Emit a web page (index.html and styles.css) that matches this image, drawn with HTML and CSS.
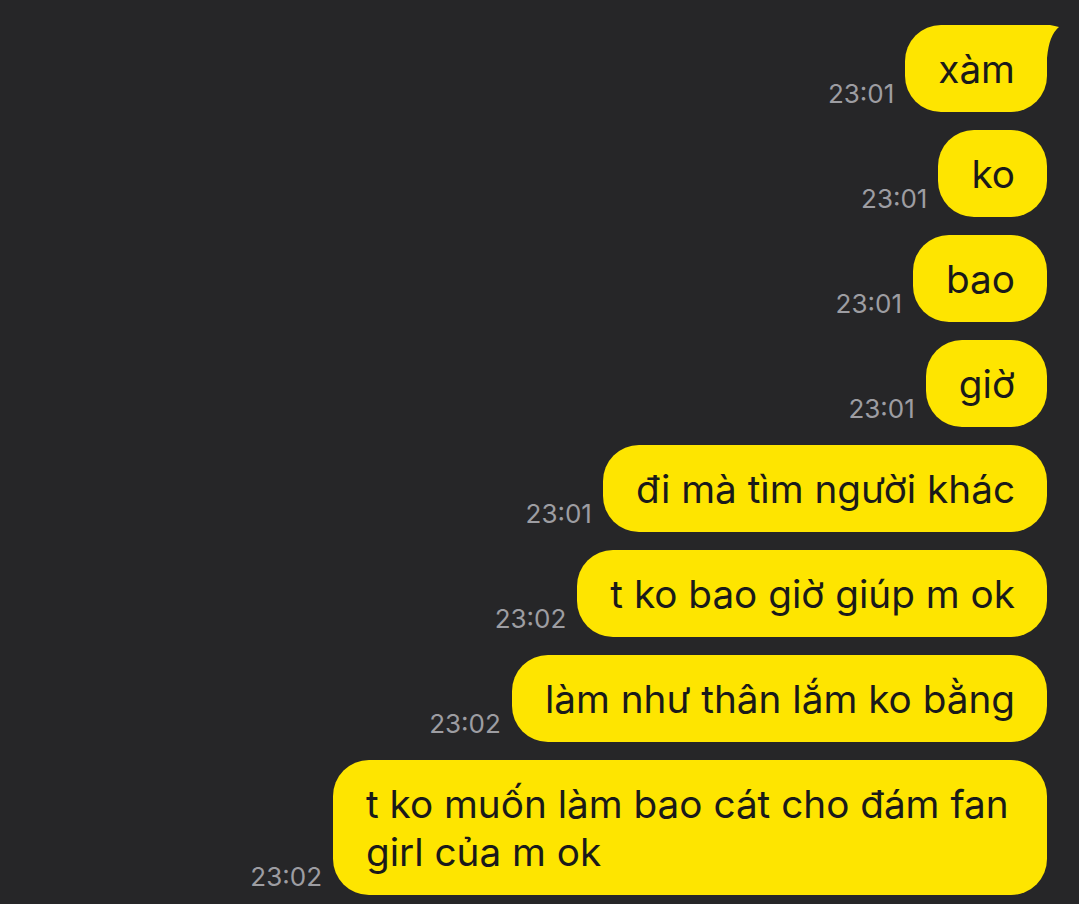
FILE: index.html
```html
<!DOCTYPE html>
<html lang="vi">
<head>
<meta charset="utf-8">
<title>Chat</title>
<link rel="stylesheet" href="styles.css">
</head>
<body>
<main class="chat">
  <div class="row">
    <span class="time">23:01</span>
    <div class="bubble bubble--first">xàm
      <svg class="tail" width="14" height="36" viewBox="0 0 14 36" aria-hidden="true"><path d="M0 0 L4 0 Q9 1 13 2 Q3 10 1 33 L0 36 Z" fill="#fee500"/></svg>
    </div>
  </div>
  <div class="row">
    <span class="time">23:01</span>
    <div class="bubble">ko</div>
  </div>
  <div class="row">
    <span class="time">23:01</span>
    <div class="bubble">bao</div>
  </div>
  <div class="row">
    <span class="time">23:01</span>
    <div class="bubble">giờ</div>
  </div>
  <div class="row">
    <span class="time">23:01</span>
    <div class="bubble">đi mà tìm người khác</div>
  </div>
  <div class="row">
    <span class="time">23:02</span>
    <div class="bubble">t ko bao giờ giúp m ok</div>
  </div>
  <div class="row">
    <span class="time">23:02</span>
    <div class="bubble">làm như thân lắm ko bằng</div>
  </div>
  <div class="row">
    <span class="time">23:02</span>
    <div class="bubble">t ko muốn làm bao cát cho đám fan girl của m ok</div>
  </div>
</main>
</body>
</html>
```

FILE: styles.css
```css
html, body {
  margin: 0;
  padding: 0;
  background: #262628;
  height: 100%;
}

body {
  font-family: Inter, "Noto Sans", "Liberation Sans", sans-serif;
  overflow: hidden;
}

.chat {
  display: flex;
  flex-direction: column;
  align-items: flex-end;
  gap: 18px;
  padding: 25px 32px 0 0;
}

.row {
  display: flex;
  align-items: flex-end;
  gap: 11px;
}

.time {
  color: #9d9da2;
  font-size: 26px;
  line-height: 32px;
  padding-bottom: 2px;
  white-space: nowrap;
}

.bubble {
  position: relative;
  background: #fee500;
  color: #1a1a1a;
  font-size: 38.7px;
  line-height: 48px;
  padding: 20px 32px 19px 33px;
  border-radius: 36px;
  max-width: 714px;
  box-sizing: border-box;
}

.bubble--first {
  border-top-right-radius: 0;
}

.tail {
  position: absolute;
  top: 0;
  right: -13px;
  display: block;
}
```
